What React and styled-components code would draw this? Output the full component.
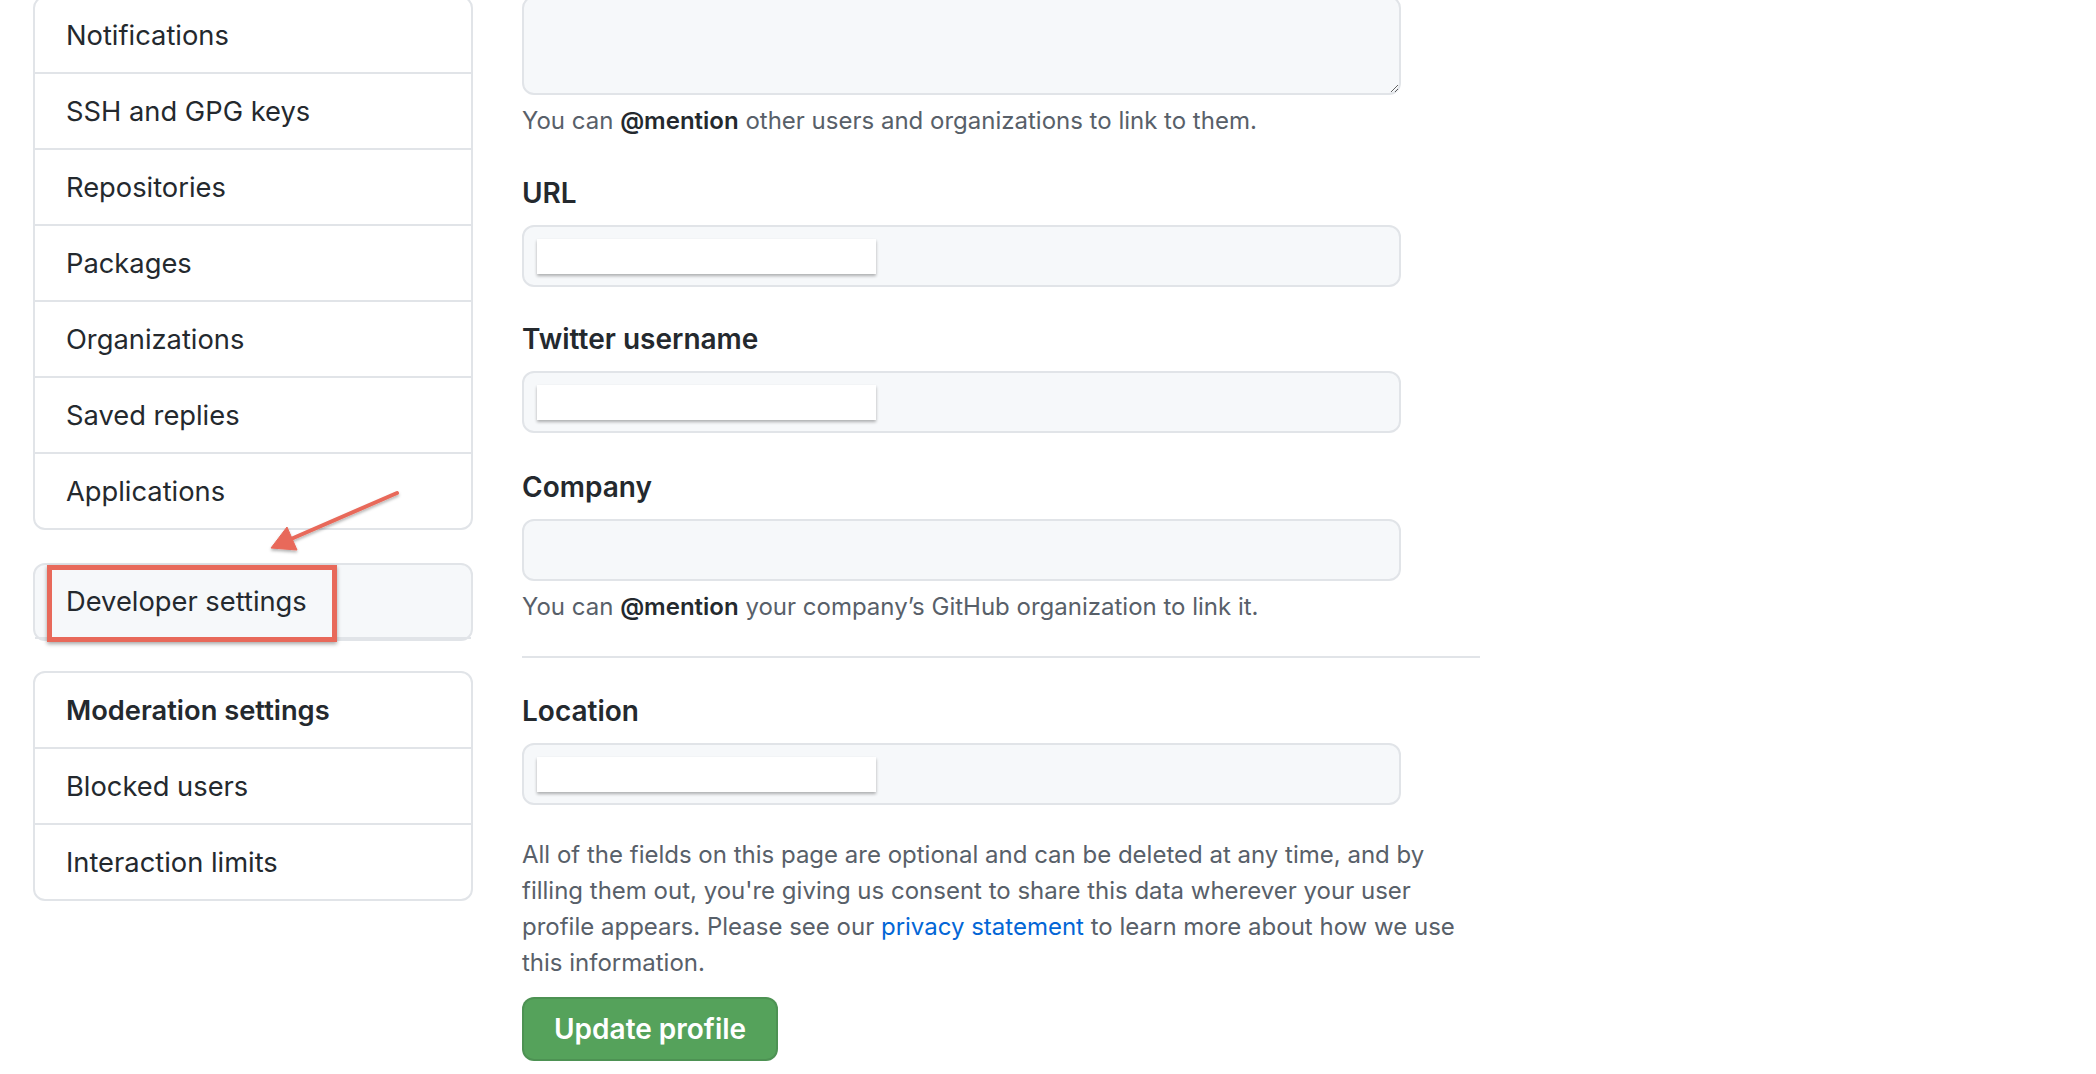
import React from "react";
import styled, { createGlobalStyle } from "styled-components";

const GlobalStyle = createGlobalStyle`
  html, body { margin: 0; padding: 0; background: #ffffff; }
  body {
    font-family: Inter, "Noto Sans", "Liberation Sans", sans-serif;
    color: #24292e;
    overflow: hidden;
  }
  * { box-sizing: border-box; }
`;

const Page = styled.div`
  display: flex;
  align-items: flex-start;
  gap: 49px;
  margin-top: -4px;
  padding-left: 33px;
`;

const Sidebar = styled.nav`
  position: relative;
  width: 440px;
  display: flex;
  flex-direction: column;
  flex-shrink: 0;
`;

const MenuBox = styled.div`
  position: relative;
  margin-top: ${(p) => p.$space ?? 0}px;
  border: 2px solid #e1e4e8;
  border-radius: 12px;
  background: ${(p) => (p.$muted ? "#f6f8fa" : "#ffffff")};
`;

const MenuItem = styled.div`
  padding: ${(p) => (p.$compact ? "16px 31px 14px" : "17px 31px 15px")};
  font-size: 27.3px;
  line-height: 42px;
  font-weight: ${(p) => (p.$heading ? 600 : 400)};
  color: #24292e;
  border-bottom: 2px solid #e1e4e8;
  &:last-child { border-bottom: none; }
`;

const Highlight = styled.div`
  position: absolute;
  left: 12px;
  top: 0;
  width: 290px;
  height: 77px;
  border: 5px solid #e8695a;
  box-shadow: 0 2px 4px rgba(0, 0, 0, 0.35);
`;

const ArrowSvg = styled.svg`
  position: absolute;
  left: 230px;
  top: 485px;
  overflow: visible;
`;

const Main = styled.main`
  width: 958px;
  display: flex;
  flex-direction: column;
`;

const TextArea = styled.textarea`
  display: block;
  width: 879px;
  height: 99px;
  border: 2px solid #e1e4e8;
  border-radius: 12px;
  background: #f6f8fa;
  resize: vertical;
  font-family: inherit;
  font-size: 28px;
  outline: none;
`;

const Note = styled.p`
  margin: 8px 0 0;
  font-size: 24px;
  line-height: 36px;
  color: #586069;
  strong { color: #24292e; font-weight: 600; }
`;

const FieldGroup = styled.div`
  margin-top: ${(p) => p.$top ?? 33}px;
  display: flex;
  flex-direction: column;
`;

const Label = styled.label`
  font-size: 28px;
  line-height: 42px;
  font-weight: 600;
  color: #24292e;
  margin-bottom: 11px;
`;

const InputBox = styled.div`
  width: 879px;
  height: 62px;
  border: 2px solid #e1e4e8;
  border-radius: 12px;
  background: #f6f8fa;
  display: flex;
  align-items: center;
  padding-left: 13px;
`;

const Redacted = styled.span`
  display: block;
  width: 339px;
  height: 35px;
  background: #ffffff;
  box-shadow: 0 2px 3px rgba(0, 0, 0, 0.3);
`;

const Divider = styled.hr`
  margin: 31px 0 0;
  width: 958px;
  border: none;
  border-top: 2px solid #e1e4e8;
`;

const Disclaimer = styled.p`
  margin: 32px 0 0;
  max-width: 936px;
  font-size: 24px;
  line-height: 36px;
  color: #586069;
  a { color: #0366d6; text-decoration: none; }
`;

const Button = styled.button`
  margin-top: 16px;
  align-self: flex-start;
  height: 64px;
  padding: 0 30px;
  font-family: inherit;
  font-size: 28px;
  font-weight: 600;
  color: #ffffff;
  background: #55a25b;
  border: 2px solid rgba(27, 31, 35, 0.12);
  border-radius: 12px;
`;

const mainItems = [
  "Notifications",
  "SSH and GPG keys",
  "Repositories",
  "Packages",
  "Organizations",
  "Saved replies",
  "Applications",
];

const Field = ({ label, redacted = true, top }) => (
  <FieldGroup $top={top}>
    <Label>{label}</Label>
    <InputBox>{redacted && <Redacted />}</InputBox>
  </FieldGroup>
);

export default function App() {
  return (
    <>
      <GlobalStyle />
      <Page>
        <Sidebar>
          <MenuBox>
            {mainItems.map((t) => (
              <MenuItem key={t}>{t}</MenuItem>
            ))}
          </MenuBox>
          <MenuBox $muted $space={33}>
            <MenuItem $compact>Developer settings</MenuItem>
            <Highlight />
          </MenuBox>
          <MenuBox $space={30}>
            <MenuItem $heading>Moderation settings</MenuItem>
            <MenuItem>Blocked users</MenuItem>
            <MenuItem>Interaction limits</MenuItem>
          </MenuBox>
          <ArrowSvg width="140" height="80" viewBox="0 0 140 80">
            <defs>
              <filter id="sh" x="-20%" y="-20%" width="140%" height="160%">
                <feDropShadow dx="0" dy="2" stdDeviation="1.5" floodColor="#000" floodOpacity="0.3" />
              </filter>
            </defs>
            <g filter="url(#sh)" fill="#e8695a" stroke="#e8695a">
              <line x1="134" y1="12" x2="28" y2="58" strokeWidth="4" strokeLinecap="round" />
              <polygon points="8,67 24,46 34,69" strokeWidth="1" strokeLinejoin="round" />
            </g>
          </ArrowSvg>
        </Sidebar>
        <Main>
          <TextArea defaultValue="" />
          <Note>
            You can <strong>@mention</strong> other users and organizations to link to them.
          </Note>
          <Field label="URL" />
          <Field label="Twitter username" top={31} />
          <Field label="Company" redacted={false} />
          <Note>
            You can <strong>@mention</strong> your company’s GitHub organization to link it.
          </Note>
          <Divider />
          <Field label="Location" top={32} />
          <Disclaimer>
            All of the fields on this page are optional and can be deleted at any time, and by
            filling them out, you're giving us consent to share this data wherever your user
            profile appears. Please see our <a href="#">privacy statement</a> to learn more about
            how we use this information.
          </Disclaimer>
          <Button>Update profile</Button>
        </Main>
      </Page>
    </>
  );
}
